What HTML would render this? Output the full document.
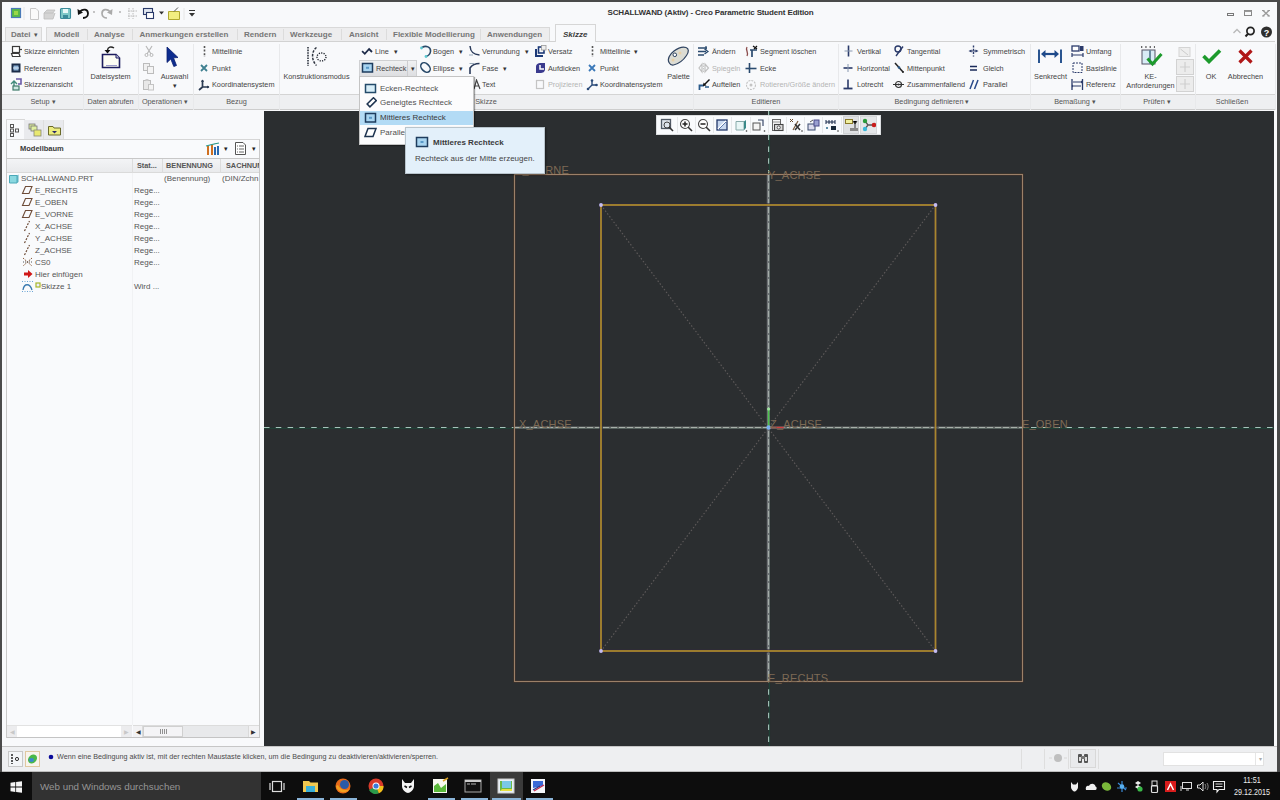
<!DOCTYPE html>
<html><head><meta charset="utf-8"><style>
html,body{margin:0;padding:0;width:1280px;height:800px;overflow:hidden;background:#4a4a4a;font-family:"Liberation Sans",sans-serif;}
div{box-sizing:border-box;}
</style></head><body>
<div style="position:absolute;left:2px;top:2px;width:1275px;height:770px;background:#f8f9fb;"></div>
<div style="position:absolute;left:607.5px;top:7.0px;height:12px;line-height:12px;font-size:8px;color:#333;font-weight:bold;letter-spacing:-0.15px;white-space:nowrap;">SCHALLWAND (Aktiv) - Creo Parametric Student Edition</div>
<div style="position:absolute;left:5px;top:27px;width:37px;height:15px;background:#ededee;border:1px solid #d9d9d9;border-bottom:none;"></div>
<div style="position:absolute;left:46px;top:27px;width:504px;height:15px;background:#ededee;border:1px solid #d9d9d9;border-bottom:none;"></div>
<div style="position:absolute;left:87px;top:29px;width:1px;height:11px;background:#dcdcdc;"></div>
<div style="position:absolute;left:132px;top:29px;width:1px;height:11px;background:#dcdcdc;"></div>
<div style="position:absolute;left:237px;top:29px;width:1px;height:11px;background:#dcdcdc;"></div>
<div style="position:absolute;left:283px;top:29px;width:1px;height:11px;background:#dcdcdc;"></div>
<div style="position:absolute;left:341px;top:29px;width:1px;height:11px;background:#dcdcdc;"></div>
<div style="position:absolute;left:386px;top:29px;width:1px;height:11px;background:#dcdcdc;"></div>
<div style="position:absolute;left:480px;top:29px;width:1px;height:11px;background:#dcdcdc;"></div>
<div style="position:absolute;left:2px;top:41px;width:1273px;height:1px;background:#d2d2d2;"></div>
<div style="position:absolute;left:555px;top:24px;width:41px;height:18px;background:#f8f9fb;border:1px solid #d6d6d6;border-bottom:none;"></div>
<div style="position:absolute;left:11px;top:28.5px;height:12px;line-height:12px;font-size:8px;color:#767676;font-weight:bold;letter-spacing:0px;white-space:nowrap;">Datei</div>
<div style="position:absolute;left:54px;top:28.5px;height:12px;line-height:12px;font-size:8px;color:#767676;font-weight:bold;letter-spacing:0px;white-space:nowrap;">Modell</div>
<div style="position:absolute;left:94px;top:28.5px;height:12px;line-height:12px;font-size:8px;color:#767676;font-weight:bold;letter-spacing:0px;white-space:nowrap;">Analyse</div>
<div style="position:absolute;left:139.5px;top:28.5px;height:12px;line-height:12px;font-size:8px;color:#767676;font-weight:bold;letter-spacing:0px;white-space:nowrap;">Anmerkungen erstellen</div>
<div style="position:absolute;left:244px;top:28.5px;height:12px;line-height:12px;font-size:8px;color:#767676;font-weight:bold;letter-spacing:0px;white-space:nowrap;">Rendern</div>
<div style="position:absolute;left:290px;top:28.5px;height:12px;line-height:12px;font-size:8px;color:#767676;font-weight:bold;letter-spacing:0px;white-space:nowrap;">Werkzeuge</div>
<div style="position:absolute;left:349px;top:28.5px;height:12px;line-height:12px;font-size:8px;color:#767676;font-weight:bold;letter-spacing:0px;white-space:nowrap;">Ansicht</div>
<div style="position:absolute;left:393px;top:28.5px;height:12px;line-height:12px;font-size:8px;color:#767676;font-weight:bold;letter-spacing:0px;white-space:nowrap;">Flexible Modellierung</div>
<div style="position:absolute;left:487px;top:28.5px;height:12px;line-height:12px;font-size:8px;color:#767676;font-weight:bold;letter-spacing:0px;white-space:nowrap;">Anwendungen</div>
<div style="position:absolute;left:563px;top:28.5px;height:12px;line-height:12px;font-size:8px;color:#3c3c3c;font-weight:bold;letter-spacing:0px;white-space:nowrap;font-style:italic;">Skizze</div>
<div style="position:absolute;left:2px;top:94px;width:1273px;height:16px;background:#eeeff1;border-top:1px solid #d4d4d4;border-bottom:1px solid #cdcdcd;"></div>
<div style="position:absolute;left:83px;top:44px;width:1px;height:66px;background:#e8e9eb;"></div>
<div style="position:absolute;left:138px;top:44px;width:1px;height:66px;background:#e8e9eb;"></div>
<div style="position:absolute;left:193px;top:44px;width:1px;height:66px;background:#e8e9eb;"></div>
<div style="position:absolute;left:279px;top:44px;width:1px;height:66px;background:#e8e9eb;"></div>
<div style="position:absolute;left:693px;top:44px;width:1px;height:66px;background:#e8e9eb;"></div>
<div style="position:absolute;left:838px;top:44px;width:1px;height:66px;background:#e8e9eb;"></div>
<div style="position:absolute;left:1030px;top:44px;width:1px;height:66px;background:#e8e9eb;"></div>
<div style="position:absolute;left:1120px;top:44px;width:1px;height:66px;background:#e8e9eb;"></div>
<div style="position:absolute;left:1195px;top:44px;width:1px;height:66px;background:#e8e9eb;"></div>
<div style="position:absolute;left:1275px;top:44px;width:1px;height:66px;background:#e8e9eb;"></div>
<div style="position:absolute;left:-157px;width:400px;text-align:center;top:96.0px;height:12px;line-height:12px;font-size:7.3px;color:#555;font-weight:normal;letter-spacing:0px;white-space:nowrap;">Setup &#9662;</div>
<div style="position:absolute;left:-89.5px;width:400px;text-align:center;top:96.0px;height:12px;line-height:12px;font-size:7.3px;color:#555;font-weight:normal;letter-spacing:0px;white-space:nowrap;">Daten abrufen</div>
<div style="position:absolute;left:-35px;width:400px;text-align:center;top:96.0px;height:12px;line-height:12px;font-size:7.3px;color:#555;font-weight:normal;letter-spacing:0px;white-space:nowrap;">Operationen &#9662;</div>
<div style="position:absolute;left:36.5px;width:400px;text-align:center;top:96.0px;height:12px;line-height:12px;font-size:7.3px;color:#555;font-weight:normal;letter-spacing:0px;white-space:nowrap;">Bezug</div>
<div style="position:absolute;left:286px;width:400px;text-align:center;top:96.0px;height:12px;line-height:12px;font-size:7.3px;color:#555;font-weight:normal;letter-spacing:0px;white-space:nowrap;">Skizze</div>
<div style="position:absolute;left:566px;width:400px;text-align:center;top:96.0px;height:12px;line-height:12px;font-size:7.3px;color:#555;font-weight:normal;letter-spacing:0px;white-space:nowrap;">Editieren</div>
<div style="position:absolute;left:732px;width:400px;text-align:center;top:96.0px;height:12px;line-height:12px;font-size:7.3px;color:#555;font-weight:normal;letter-spacing:0px;white-space:nowrap;">Bedingung definieren &#9662;</div>
<div style="position:absolute;left:875px;width:400px;text-align:center;top:96.0px;height:12px;line-height:12px;font-size:7.3px;color:#555;font-weight:normal;letter-spacing:0px;white-space:nowrap;">Bema&szlig;ung &#9662;</div>
<div style="position:absolute;left:957px;width:400px;text-align:center;top:96.0px;height:12px;line-height:12px;font-size:7.3px;color:#555;font-weight:normal;letter-spacing:0px;white-space:nowrap;">Pr&uuml;fen &#9662;</div>
<div style="position:absolute;left:1032px;width:400px;text-align:center;top:96.0px;height:12px;line-height:12px;font-size:7.3px;color:#555;font-weight:normal;letter-spacing:0px;white-space:nowrap;">Schlie&szlig;en</div>
<div style="position:absolute;left:24px;top:45.6px;height:12px;line-height:12px;font-size:7.3px;color:#444;font-weight:normal;letter-spacing:0px;white-space:nowrap;">Skizze einrichten</div>
<div style="position:absolute;left:24px;top:62.599999999999994px;height:12px;line-height:12px;font-size:7.3px;color:#444;font-weight:normal;letter-spacing:0px;white-space:nowrap;">Referenzen</div>
<div style="position:absolute;left:24px;top:78.6px;height:12px;line-height:12px;font-size:7.3px;color:#444;font-weight:normal;letter-spacing:0px;white-space:nowrap;">Skizzenansicht</div>
<div style="position:absolute;left:-89.5px;width:400px;text-align:center;top:70.8px;height:12px;line-height:12px;font-size:7.3px;color:#444;font-weight:normal;letter-spacing:0px;white-space:nowrap;">Dateisystem</div>
<div style="position:absolute;left:-25.5px;width:400px;text-align:center;top:70.8px;height:12px;line-height:12px;font-size:7.3px;color:#444;font-weight:normal;letter-spacing:0px;white-space:nowrap;">Auswahl</div>
<div style="position:absolute;left:212px;top:45.6px;height:12px;line-height:12px;font-size:7.3px;color:#444;font-weight:normal;letter-spacing:0px;white-space:nowrap;">Mittellinie</div>
<div style="position:absolute;left:212px;top:62.599999999999994px;height:12px;line-height:12px;font-size:7.3px;color:#444;font-weight:normal;letter-spacing:0px;white-space:nowrap;">Punkt</div>
<div style="position:absolute;left:212px;top:78.6px;height:12px;line-height:12px;font-size:7.3px;color:#444;font-weight:normal;letter-spacing:0px;white-space:nowrap;">Koordinatensystem</div>
<div style="position:absolute;left:116.5px;width:400px;text-align:center;top:70.8px;height:12px;line-height:12px;font-size:7.3px;color:#444;font-weight:normal;letter-spacing:0px;white-space:nowrap;">Konstruktionsmodus</div>
<div style="position:absolute;left:375px;top:45.6px;height:12px;line-height:12px;font-size:7.3px;color:#444;font-weight:normal;letter-spacing:0px;white-space:nowrap;">Line</div>
<div style="position:absolute;left:433px;top:45.6px;height:12px;line-height:12px;font-size:7.3px;color:#444;font-weight:normal;letter-spacing:0px;white-space:nowrap;">Bogen</div>
<div style="position:absolute;left:433px;top:62.599999999999994px;height:12px;line-height:12px;font-size:7.3px;color:#444;font-weight:normal;letter-spacing:0px;white-space:nowrap;">Ellipse</div>
<div style="position:absolute;left:482px;top:45.6px;height:12px;line-height:12px;font-size:7.3px;color:#444;font-weight:normal;letter-spacing:0px;white-space:nowrap;">Verrundung</div>
<div style="position:absolute;left:482px;top:62.599999999999994px;height:12px;line-height:12px;font-size:7.3px;color:#444;font-weight:normal;letter-spacing:0px;white-space:nowrap;">Fase</div>
<div style="position:absolute;left:482px;top:78.6px;height:12px;line-height:12px;font-size:7.3px;color:#444;font-weight:normal;letter-spacing:0px;white-space:nowrap;">Text</div>
<div style="position:absolute;left:548px;top:45.6px;height:12px;line-height:12px;font-size:7.3px;color:#444;font-weight:normal;letter-spacing:0px;white-space:nowrap;">Versatz</div>
<div style="position:absolute;left:548px;top:62.599999999999994px;height:12px;line-height:12px;font-size:7.3px;color:#444;font-weight:normal;letter-spacing:0px;white-space:nowrap;">Aufdicken</div>
<div style="position:absolute;left:548px;top:78.6px;height:12px;line-height:12px;font-size:7.3px;color:#b4b4b4;font-weight:normal;letter-spacing:0px;white-space:nowrap;">Projizieren</div>
<div style="position:absolute;left:600px;top:45.6px;height:12px;line-height:12px;font-size:7.3px;color:#444;font-weight:normal;letter-spacing:0px;white-space:nowrap;">Mittellinie</div>
<div style="position:absolute;left:600px;top:62.599999999999994px;height:12px;line-height:12px;font-size:7.3px;color:#444;font-weight:normal;letter-spacing:0px;white-space:nowrap;">Punkt</div>
<div style="position:absolute;left:600px;top:78.6px;height:12px;line-height:12px;font-size:7.3px;color:#444;font-weight:normal;letter-spacing:0px;white-space:nowrap;">Koordinatensystem</div>
<div style="position:absolute;left:478.5px;width:400px;text-align:center;top:70.8px;height:12px;line-height:12px;font-size:7.3px;color:#444;font-weight:normal;letter-spacing:0px;white-space:nowrap;">Palette</div>
<div style="position:absolute;left:712px;top:45.6px;height:12px;line-height:12px;font-size:7.3px;color:#444;font-weight:normal;letter-spacing:0px;white-space:nowrap;">&Auml;ndern</div>
<div style="position:absolute;left:712px;top:62.599999999999994px;height:12px;line-height:12px;font-size:7.3px;color:#b4b4b4;font-weight:normal;letter-spacing:0px;white-space:nowrap;">Spiegeln</div>
<div style="position:absolute;left:712px;top:78.6px;height:12px;line-height:12px;font-size:7.3px;color:#444;font-weight:normal;letter-spacing:0px;white-space:nowrap;">Aufteilen</div>
<div style="position:absolute;left:760px;top:45.6px;height:12px;line-height:12px;font-size:7.3px;color:#444;font-weight:normal;letter-spacing:0px;white-space:nowrap;">Segment l&ouml;schen</div>
<div style="position:absolute;left:760px;top:62.599999999999994px;height:12px;line-height:12px;font-size:7.3px;color:#444;font-weight:normal;letter-spacing:0px;white-space:nowrap;">Ecke</div>
<div style="position:absolute;left:760px;top:78.6px;height:12px;line-height:12px;font-size:7.3px;color:#b4b4b4;font-weight:normal;letter-spacing:0px;white-space:nowrap;">Rotieren/Gr&ouml;&szlig;e &auml;ndern</div>
<div style="position:absolute;left:857px;top:45.6px;height:12px;line-height:12px;font-size:7.3px;color:#444;font-weight:normal;letter-spacing:0px;white-space:nowrap;">Vertikal</div>
<div style="position:absolute;left:857px;top:62.599999999999994px;height:12px;line-height:12px;font-size:7.3px;color:#444;font-weight:normal;letter-spacing:0px;white-space:nowrap;">Horizontal</div>
<div style="position:absolute;left:857px;top:78.6px;height:12px;line-height:12px;font-size:7.3px;color:#444;font-weight:normal;letter-spacing:0px;white-space:nowrap;">Lotrecht</div>
<div style="position:absolute;left:907px;top:45.6px;height:12px;line-height:12px;font-size:7.3px;color:#444;font-weight:normal;letter-spacing:0px;white-space:nowrap;">Tangential</div>
<div style="position:absolute;left:907px;top:62.599999999999994px;height:12px;line-height:12px;font-size:7.3px;color:#444;font-weight:normal;letter-spacing:0px;white-space:nowrap;">Mittenpunkt</div>
<div style="position:absolute;left:907px;top:78.6px;height:12px;line-height:12px;font-size:7.3px;color:#444;font-weight:normal;letter-spacing:0px;white-space:nowrap;">Zusammenfallend</div>
<div style="position:absolute;left:983px;top:45.6px;height:12px;line-height:12px;font-size:7.3px;color:#444;font-weight:normal;letter-spacing:0px;white-space:nowrap;">Symmetrisch</div>
<div style="position:absolute;left:983px;top:62.599999999999994px;height:12px;line-height:12px;font-size:7.3px;color:#444;font-weight:normal;letter-spacing:0px;white-space:nowrap;">Gleich</div>
<div style="position:absolute;left:983px;top:78.6px;height:12px;line-height:12px;font-size:7.3px;color:#444;font-weight:normal;letter-spacing:0px;white-space:nowrap;">Parallel</div>
<div style="position:absolute;left:850.5px;width:400px;text-align:center;top:70.8px;height:12px;line-height:12px;font-size:7.3px;color:#444;font-weight:normal;letter-spacing:0px;white-space:nowrap;">Senkrecht</div>
<div style="position:absolute;left:1086px;top:45.6px;height:12px;line-height:12px;font-size:7.3px;color:#444;font-weight:normal;letter-spacing:0px;white-space:nowrap;">Umfang</div>
<div style="position:absolute;left:1086px;top:62.599999999999994px;height:12px;line-height:12px;font-size:7.3px;color:#444;font-weight:normal;letter-spacing:0px;white-space:nowrap;">Basislinie</div>
<div style="position:absolute;left:1086px;top:78.6px;height:12px;line-height:12px;font-size:7.3px;color:#444;font-weight:normal;letter-spacing:0px;white-space:nowrap;">Referenz</div>
<div style="position:absolute;left:950.5px;width:400px;text-align:center;top:70.8px;height:12px;line-height:12px;font-size:7.3px;color:#444;font-weight:normal;letter-spacing:0px;white-space:nowrap;">KE-</div>
<div style="position:absolute;left:950.5px;width:400px;text-align:center;top:79.8px;height:12px;line-height:12px;font-size:7.3px;color:#444;font-weight:normal;letter-spacing:0px;white-space:nowrap;">Anforderungen</div>
<div style="position:absolute;left:1011px;width:400px;text-align:center;top:70.8px;height:12px;line-height:12px;font-size:7.3px;color:#444;font-weight:normal;letter-spacing:0px;white-space:nowrap;">OK</div>
<div style="position:absolute;left:1045.5px;width:400px;text-align:center;top:70.8px;height:12px;line-height:12px;font-size:7.3px;color:#444;font-weight:normal;letter-spacing:0px;white-space:nowrap;">Abbrechen</div>
<div style="position:absolute;left:264px;top:111px;width:1010px;height:635px;background:#2b2e30;"></div>
<div style="position:absolute;left:6px;top:119px;width:19px;height:21px;background:#f8f9fb;border:1px solid #d8d8d8;border-bottom:none;"></div>
<div style="position:absolute;left:24px;top:120px;width:20px;height:19px;background:#e9eaed;border-right:1px solid #dedede;"></div>
<div style="position:absolute;left:44px;top:120px;width:20px;height:19px;background:#e9eaed;border-right:1px solid #dedede;"></div>
<div style="position:absolute;left:6px;top:139px;width:254px;height:599px;border:1px solid #c9c9c9;border-top:1px solid #d6d6d6;background:#f9fafc;"></div>
<div style="position:absolute;left:20px;top:142.5px;height:12px;line-height:12px;font-size:7.5px;color:#3a3a3a;font-weight:bold;letter-spacing:0px;white-space:nowrap;">Modellbaum</div>
<div style="position:absolute;left:7px;top:158px;width:252px;height:1px;background:#c8c8c8;"></div>
<div style="position:absolute;left:7px;top:159px;width:252px;height:14px;background:linear-gradient(#f3f4f6,#e9eaec);border-bottom:1px solid #dadada;"></div>
<div style="position:absolute;left:132px;top:159px;width:1px;height:14px;background:#dcdcdc;"></div>
<div style="position:absolute;left:162px;top:159px;width:1px;height:14px;background:#dcdcdc;"></div>
<div style="position:absolute;left:220px;top:159px;width:1px;height:14px;background:#dcdcdc;"></div>
<div style="position:absolute;left:137px;top:160.0px;height:12px;line-height:12px;font-size:7.3px;color:#555;font-weight:bold;letter-spacing:0px;white-space:nowrap;">Stat...</div>
<div style="position:absolute;left:166px;top:160.0px;height:12px;line-height:12px;font-size:7.3px;color:#555;font-weight:bold;letter-spacing:0px;white-space:nowrap;">BENENNUNG</div>
<div style="position:absolute;left:226px;top:160.0px;height:12px;line-height:12px;font-size:7.3px;color:#555;font-weight:bold;letter-spacing:0px;white-space:nowrap;overflow:hidden;width:33px;">SACHNUMMER</div>
<div style="position:absolute;left:21px;top:173.0px;height:12px;line-height:12px;font-size:8px;color:#555;font-weight:normal;letter-spacing:0px;white-space:nowrap;">SCHALLWAND.PRT</div>
<div style="position:absolute;left:35px;top:185.0px;height:12px;line-height:12px;font-size:8px;color:#555;font-weight:normal;letter-spacing:0px;white-space:nowrap;">E_RECHTS</div>
<div style="position:absolute;left:134px;top:185.0px;height:12px;line-height:12px;font-size:8px;color:#555;font-weight:normal;letter-spacing:0px;white-space:nowrap;">Rege...</div>
<div style="position:absolute;left:35px;top:197.0px;height:12px;line-height:12px;font-size:8px;color:#555;font-weight:normal;letter-spacing:0px;white-space:nowrap;">E_OBEN</div>
<div style="position:absolute;left:134px;top:197.0px;height:12px;line-height:12px;font-size:8px;color:#555;font-weight:normal;letter-spacing:0px;white-space:nowrap;">Rege...</div>
<div style="position:absolute;left:35px;top:209.0px;height:12px;line-height:12px;font-size:8px;color:#555;font-weight:normal;letter-spacing:0px;white-space:nowrap;">E_VORNE</div>
<div style="position:absolute;left:134px;top:209.0px;height:12px;line-height:12px;font-size:8px;color:#555;font-weight:normal;letter-spacing:0px;white-space:nowrap;">Rege...</div>
<div style="position:absolute;left:35px;top:221.0px;height:12px;line-height:12px;font-size:8px;color:#555;font-weight:normal;letter-spacing:0px;white-space:nowrap;">X_ACHSE</div>
<div style="position:absolute;left:134px;top:221.0px;height:12px;line-height:12px;font-size:8px;color:#555;font-weight:normal;letter-spacing:0px;white-space:nowrap;">Rege...</div>
<div style="position:absolute;left:35px;top:233.0px;height:12px;line-height:12px;font-size:8px;color:#555;font-weight:normal;letter-spacing:0px;white-space:nowrap;">Y_ACHSE</div>
<div style="position:absolute;left:134px;top:233.0px;height:12px;line-height:12px;font-size:8px;color:#555;font-weight:normal;letter-spacing:0px;white-space:nowrap;">Rege...</div>
<div style="position:absolute;left:35px;top:245.0px;height:12px;line-height:12px;font-size:8px;color:#555;font-weight:normal;letter-spacing:0px;white-space:nowrap;">Z_ACHSE</div>
<div style="position:absolute;left:134px;top:245.0px;height:12px;line-height:12px;font-size:8px;color:#555;font-weight:normal;letter-spacing:0px;white-space:nowrap;">Rege...</div>
<div style="position:absolute;left:35px;top:257.0px;height:12px;line-height:12px;font-size:8px;color:#555;font-weight:normal;letter-spacing:0px;white-space:nowrap;">CS0</div>
<div style="position:absolute;left:134px;top:257.0px;height:12px;line-height:12px;font-size:8px;color:#555;font-weight:normal;letter-spacing:0px;white-space:nowrap;">Rege...</div>
<div style="position:absolute;left:35px;top:269.0px;height:12px;line-height:12px;font-size:8px;color:#555;font-weight:normal;letter-spacing:0px;white-space:nowrap;">Hier einf&uuml;gen</div>
<div style="position:absolute;left:41px;top:281.0px;height:12px;line-height:12px;font-size:8px;color:#555;font-weight:normal;letter-spacing:0px;white-space:nowrap;">Skizze 1</div>
<div style="position:absolute;left:134px;top:281.0px;height:12px;line-height:12px;font-size:8px;color:#555;font-weight:normal;letter-spacing:0px;white-space:nowrap;">Wird ...</div>
<div style="position:absolute;left:164px;top:173.0px;height:12px;line-height:12px;font-size:8px;color:#555;font-weight:normal;letter-spacing:0px;white-space:nowrap;">(Benennung)</div>
<div style="position:absolute;left:222px;top:173.0px;height:12px;line-height:12px;font-size:8px;color:#555;font-weight:normal;letter-spacing:0px;white-space:nowrap;">(DIN/Zchn</div>
<div style="position:absolute;left:132px;top:173px;width:1px;height:552px;background:#f1f2f4;"></div>
<div style="position:absolute;left:7px;top:725px;width:125px;height:12px;background:#ececee;border-top:1px solid #e2e2e2;"></div>
<div style="position:absolute;left:17px;top:726px;width:104px;height:11px;background:#ffffff;"></div>
<div style="position:absolute;left:133px;top:725px;width:126px;height:12px;background:#e8e9eb;border-top:1px solid #dcdcdc;"></div>
<div style="position:absolute;left:143px;top:726px;width:40px;height:11px;background:#f4f4f6;border:1px solid #d0d0d0;"></div>
<div style="position:absolute;left:7px;top:737px;width:253px;height:1px;background:#c4c4c4;"></div>
<div style="position:absolute;left:2px;top:746px;width:1275px;height:1px;background:#c6c6c6;"></div>
<div style="position:absolute;left:2px;top:747px;width:1275px;height:24px;background:#eeeff1;"></div>
<div style="position:absolute;left:2px;top:771px;width:1275px;height:1px;background:#bdbdbd;"></div>
<div style="position:absolute;left:57px;top:751.0px;height:12px;line-height:12px;font-size:7.2px;color:#4a4a4a;font-weight:normal;letter-spacing:0px;white-space:nowrap;">Wenn eine Bedingung aktiv ist, mit der rechten Maustaste klicken, um die Bedingung zu deaktivieren/aktivieren/sperren.</div>
<div style="position:absolute;left:0px;top:772px;width:1280px;height:28px;background:#0d0d0d;"></div>
<div style="position:absolute;left:32px;top:772px;width:229px;height:28px;background:#323232;"></div>
<div style="position:absolute;left:40px;top:779.5px;height:14px;line-height:14px;font-size:9.8px;color:#959595;font-weight:normal;letter-spacing:0px;white-space:nowrap;">Web und Windows durchsuchen</div>
<div style="position:absolute;left:1051.5px;width:400px;text-align:center;top:774.3px;height:12px;line-height:12px;font-size:8.8px;color:#ececec;font-weight:normal;letter-spacing:0px;white-space:nowrap;transform:scaleX(0.82);">11:51</div>
<div style="position:absolute;left:1051.5px;width:400px;text-align:center;top:785.8px;height:12px;line-height:12px;font-size:9px;color:#ececec;font-weight:normal;letter-spacing:0px;white-space:nowrap;transform:scaleX(0.8);">29.12.2015</div>
<svg style="position:absolute;left:0px;top:0px" width="1280" height="800" viewBox="0 0 1280 800"><line x1="264" y1="428.3" x2="1274" y2="428.3" stroke="#1f4035" stroke-width="1.3"/><line x1="264" y1="427.5" x2="1274" y2="427.5" stroke="#a6c4bb" stroke-width="1.1" stroke-dasharray="5.5,6.3"/><line x1="769.4" y1="111" x2="769.4" y2="746" stroke="#1f4035" stroke-width="1.3"/><line x1="768.6" y1="111" x2="768.6" y2="746" stroke="#a6c4bb" stroke-width="1.1" stroke-dasharray="5.5,6.3"/><rect x="514.5" y="174.5" width="508" height="507" fill="none" stroke="#3d3027" stroke-width="2.2"/><rect x="514.5" y="174.5" width="508" height="507" fill="none" stroke="#9c8068" stroke-width="1.1"/><line x1="768.3" y1="175" x2="768.3" y2="681" stroke="#6e7275" stroke-width="3"/><line x1="768.6" y1="175" x2="768.6" y2="681" stroke="#aab2ae" stroke-width="1" stroke-dasharray="6,2"/><line x1="515" y1="427.6" x2="1022" y2="427.6" stroke="#6a6e6c" stroke-width="2.2"/><line x1="515" y1="427.5" x2="1022" y2="427.5" stroke="#a8b0aa" stroke-width="1" stroke-dasharray="6,2"/><line x1="601" y1="205" x2="935.5" y2="651" stroke="#5e5a5a" stroke-width="1.1" stroke-dasharray="1.5,2"/><line x1="935.5" y1="205" x2="601" y2="651" stroke="#5e5a5a" stroke-width="1.1" stroke-dasharray="1.5,2"/><rect x="601" y="205" width="334.5" height="446" fill="none" stroke="#2f2a3a" stroke-width="4" opacity="0.6"/><rect x="601" y="205" width="334.5" height="446" fill="none" stroke="#a8862e" stroke-width="1.8"/><circle cx="601" cy="205" r="1.9" fill="#c4bcf2"/><circle cx="935.5" cy="205" r="1.9" fill="#c4bcf2"/><circle cx="601" cy="651" r="1.9" fill="#c4bcf2"/><circle cx="935.5" cy="651" r="1.9" fill="#c4bcf2"/><line x1="768.6" y1="427" x2="768.6" y2="408" stroke="#4dc24d" stroke-width="1.5"/><circle cx="768.6" cy="409" r="1.6" fill="#9de29d"/><line x1="769" y1="427.5" x2="784" y2="427.5" stroke="#d04040" stroke-width="1.5"/><circle cx="768.6" cy="427.5" r="2.2" fill="#7ab0f0"/><text x="515" y="174" font-family="Liberation Sans" font-size="11" fill="#7d6a55" letter-spacing="0.2">E_VORNE</text><text x="768" y="178.5" font-family="Liberation Sans" font-size="11" fill="#7d6a55" letter-spacing="0.2">Y_ACHSE</text><text x="519" y="428" font-family="Liberation Sans" font-size="11" fill="#7d6a55" letter-spacing="0.2">X_ACHSE</text><text x="770" y="428" font-family="Liberation Sans" font-size="11" fill="#7d6a55" letter-spacing="0.2">Z_ACHSE</text><text x="1022" y="428" font-family="Liberation Sans" font-size="11" fill="#7d6a55" letter-spacing="0.2">E_OBEN</text><text x="768" y="681.5" font-family="Liberation Sans" font-size="11" fill="#7d6a55" letter-spacing="0.2">E_RECHTS</text></svg>
<svg style="position:absolute;left:10px;top:45px" width="13" height="13" viewBox="0 0 13 13"><rect x="2.5" y="1.5" width="7" height="6" fill="#fff" stroke="#3a3a3a" stroke-width="1.2"/><path d="M1.5 8.5 L9 8.5 L10 11.5 L2.5 11.5 Z" fill="#fff" stroke="#3a3a3a" stroke-width="1.2"/><path d="M9.5 4.5 L12 4.5" stroke="#3a3a3a" stroke-width="1.2"/></svg>
<svg style="position:absolute;left:11px;top:63px" width="11" height="11" viewBox="0 0 11 11"><rect x="0.5" y="0.5" width="9" height="9" fill="#1b2c48"/><rect x="2.5" y="2.5" width="5" height="5" fill="#8fb4d8"/><path d="M2 5 L8 5" stroke="#d8e6f4" stroke-width="1"/></svg>
<svg style="position:absolute;left:9px;top:78px" width="14" height="13" viewBox="0 0 14 13"><path d="M7 1 h5 v5 h-3" fill="none" stroke="#6a5aa8" stroke-width="1.6"/><path d="M2 6 l3 -3 l3 3 M5 3 v6" fill="none" stroke="#3f8a7a" stroke-width="1.4"/><rect x="4" y="8" width="6" height="4" fill="#cfe8e4" stroke="#3f7a6a" stroke-width="1.2"/></svg>
<svg style="position:absolute;left:101px;top:45px" width="20" height="24" viewBox="0 0 20 24"><path d="M13 3 C10 1 7 2 6.5 5" fill="none" stroke="#222" stroke-width="1.5"/><path d="M3.5 5 L9.5 5 L6.5 8.5 Z" fill="#111"/><path d="M1.5 9.5 H15 L18.5 13 V22.5 H1.5 Z" fill="#fdfdf4" stroke="#1d1d5e" stroke-width="1.6"/><path d="M15 9.5 V13 H18.5" fill="#c8c8e8" stroke="#1d1d5e" stroke-width="1"/><path d="M5 20.5 H16" stroke="#9a9ac8" stroke-width="1"/></svg>
<svg style="position:absolute;left:143px;top:45px" width="12" height="12" viewBox="0 0 12 12"><path d="M3 1 L8 9 M9 1 L4 9" stroke="#b8b8b8" stroke-width="1.2"/><circle cx="3.5" cy="10" r="1.5" fill="none" stroke="#b8b8b8"/><circle cx="8.5" cy="10" r="1.5" fill="none" stroke="#b8b8b8"/></svg>
<svg style="position:absolute;left:142px;top:62px" width="13" height="12" viewBox="0 0 13 12"><rect x="1.5" y="1.5" width="6" height="7" fill="#f0f0f0" stroke="#bcbcbc"/><rect x="5.5" y="4.5" width="6" height="7" fill="#f4f4f4" stroke="#bcbcbc"/></svg>
<svg style="position:absolute;left:142px;top:78px" width="13" height="13" viewBox="0 0 13 13"><rect x="1.5" y="2.5" width="7" height="9" fill="#e8e8e8" stroke="#bcbcbc"/><rect x="3.5" y="1" width="3" height="2" fill="#ccc"/><rect x="6.5" y="6.5" width="5" height="5.5" fill="#f4f4f4" stroke="#c4c4c4"/></svg>
<svg style="position:absolute;left:165px;top:46px" width="15" height="23" viewBox="0 0 15 23"><path d="M2 1 L13 11.5 L8.5 11.8 L11.5 19.5 L8.8 20.5 L5.8 13 L2 16.5 Z" fill="#0d2c8f" stroke="#0a2070" stroke-width="0.8"/></svg>
<div style="position:absolute;left:-25.5px;width:400px;text-align:center;top:79.5px;height:12px;line-height:12px;font-size:7px;color:#333;font-weight:normal;letter-spacing:0px;white-space:nowrap;">&#9662;</div>
<div style="position:absolute;left:33.5px;top:28.5px;height:12px;line-height:12px;font-size:7px;color:#555;font-weight:normal;letter-spacing:0px;white-space:nowrap;">&#9662;</div>
<svg style="position:absolute;left:202px;top:45px" width="5" height="13" viewBox="0 0 5 13"><path d="M2.5 1 V12" stroke="#555" stroke-width="1.6" stroke-dasharray="2,1.6"/></svg>
<svg style="position:absolute;left:200px;top:64px" width="8" height="8" viewBox="0 0 8 8"><path d="M1 1 L7 7 M7 1 L1 7" stroke="#3f8090" stroke-width="1.8"/></svg>
<svg style="position:absolute;left:198px;top:79px" width="12" height="12" viewBox="0 0 12 12"><path d="M4.5 1 V8 L1 11 M4.5 8 H11" fill="none" stroke="#2a3a52" stroke-width="1.7"/><path d="M3 3 L4.5 0.5 L6 3 Z M9 6.5 L11.5 8 L9 9.5 Z" fill="#2a3a52"/></svg>
<svg style="position:absolute;left:305px;top:45px" width="24" height="23" viewBox="0 0 24 23"><path d="M3 2 V21" stroke="#2f3540" stroke-width="1.6" stroke-dasharray="1.6,1"/><path d="M11.5 2.5 C6.5 6 6 15 11.5 20.5" fill="none" stroke="#2f3540" stroke-width="1.5" stroke-dasharray="2.5,1.3"/><ellipse cx="16.5" cy="12" rx="4.5" ry="4" fill="none" stroke="#1a1f28" stroke-width="1.3" stroke-dasharray="1.2,1.2"/></svg>
<svg style="position:absolute;left:361px;top:47px" width="13" height="9" viewBox="0 0 13 9"><path d="M1.1 4.2 L3.8 6.8 L8.1 2 L11 5" fill="none" stroke="#1c2a48" stroke-width="1.8"/></svg>
<div style="position:absolute;left:196px;width:400px;text-align:center;top:45.6px;height:12px;line-height:12px;font-size:7px;color:#333;font-weight:normal;letter-spacing:0px;white-space:nowrap;">&#9662;</div>
<div style="position:absolute;left:359px;top:60px;width:58px;height:17px;background:linear-gradient(#f0f1f2,#dcdde0);border:1px solid #cfd0d2;border-bottom:none;"></div>
<div style="position:absolute;left:407px;top:61px;width:1px;height:16px;background:#cdcdd0;"></div>
<div style="position:absolute;left:376px;top:62.599999999999994px;height:12px;line-height:12px;font-size:7.3px;color:#444;font-weight:normal;letter-spacing:0px;white-space:nowrap;">Rechteck</div>
<svg style="position:absolute;left:361px;top:62px" width="14" height="12" viewBox="0 0 14 12"><rect x="1.5" y="1.5" width="10" height="8.5" fill="#a8d4f0" stroke="#1e3c5e" stroke-width="1.5"/><rect x="5" y="4.8" width="3" height="2" fill="#5a9ac8"/></svg>
<div style="position:absolute;left:212.5px;width:400px;text-align:center;top:62.599999999999994px;height:12px;line-height:12px;font-size:7px;color:#333;font-weight:normal;letter-spacing:0px;white-space:nowrap;">&#9662;</div>
<svg style="position:absolute;left:419px;top:45px" width="13" height="13" viewBox="0 0 13 13"><path d="M3 2.5 C7 0 12 2 11.5 6.5 C11 10 8.5 11 7 11.5" fill="none" stroke="#2a4a6a" stroke-width="1.6"/><circle cx="2.5" cy="3" r="1.4" fill="#5ec8d0"/><circle cx="7" cy="11.5" r="1.4" fill="#5ec8d0"/></svg>
<div style="position:absolute;left:261px;width:400px;text-align:center;top:45.6px;height:12px;line-height:12px;font-size:7px;color:#333;font-weight:normal;letter-spacing:0px;white-space:nowrap;">&#9662;</div>
<svg style="position:absolute;left:419px;top:61px" width="13" height="13" viewBox="0 0 13 13"><ellipse cx="6.5" cy="6.5" rx="5.5" ry="3.8" transform="rotate(45 6.5 6.5)" fill="none" stroke="#2a4a6a" stroke-width="1.6"/></svg>
<div style="position:absolute;left:261px;width:400px;text-align:center;top:62.599999999999994px;height:12px;line-height:12px;font-size:7px;color:#333;font-weight:normal;letter-spacing:0px;white-space:nowrap;">&#9662;</div>
<svg style="position:absolute;left:468px;top:45px" width="13" height="12" viewBox="0 0 13 12"><path d="M2 1 C2.5 7 5 9.5 11.5 10" fill="none" stroke="#2a3a5a" stroke-width="1.5"/><path d="M1 10 H5" stroke="#9ab" stroke-width="1"/></svg>
<div style="position:absolute;left:327px;width:400px;text-align:center;top:45.6px;height:12px;line-height:12px;font-size:7px;color:#333;font-weight:normal;letter-spacing:0px;white-space:nowrap;">&#9662;</div>
<svg style="position:absolute;left:468px;top:62px" width="13" height="13" viewBox="0 0 13 13"><path d="M2 12 V6 C4 3 7 1.5 11.5 1.5" fill="none" stroke="#2a3a5a" stroke-width="1.6"/><path d="M1.5 1.5 H6" stroke="#9ab" stroke-width="1"/></svg>
<div style="position:absolute;left:305px;width:400px;text-align:center;top:62.599999999999994px;height:12px;line-height:12px;font-size:7px;color:#333;font-weight:normal;letter-spacing:0px;white-space:nowrap;">&#9662;</div>
<svg style="position:absolute;left:472px;top:79px" width="9" height="11" viewBox="0 0 9 11"><path d="M2 10 L4.5 1 L8 10 M3 7 H7" fill="none" stroke="#444" stroke-width="1.2"/></svg>
<svg style="position:absolute;left:534px;top:45px" width="13" height="13" viewBox="0 0 13 13"><path d="M2 4 V11 H9" fill="none" stroke="#1d3a78" stroke-width="2"/><rect x="4.5" y="2" width="5.5" height="6" fill="none" stroke="#1d3a78" stroke-width="1.6"/><rect x="7.5" y="0.5" width="4.5" height="4.5" fill="#eee" stroke="#999" stroke-width="0.8"/></svg>
<svg style="position:absolute;left:534px;top:62px" width="12" height="12" viewBox="0 0 12 12"><path d="M2 11 L2 5 C2 2 4 1 7 1 L11 1 L11 7 C11 10 9 11 6 11 Z" fill="#3a3a8e"/><path d="M6 3 V7 H10" fill="none" stroke="#fff" stroke-width="1.5"/></svg>
<svg style="position:absolute;left:535px;top:79px" width="10" height="11" viewBox="0 0 10 11"><rect x="1.5" y="1.5" width="7" height="8" fill="none" stroke="#c4c4c4" stroke-width="1.2"/></svg>
<svg style="position:absolute;left:590px;top:45px" width="5" height="13" viewBox="0 0 5 13"><path d="M2.5 1 V12" stroke="#555" stroke-width="1.6" stroke-dasharray="2,1.6"/></svg>
<div style="position:absolute;left:436px;width:400px;text-align:center;top:45.6px;height:12px;line-height:12px;font-size:7px;color:#333;font-weight:normal;letter-spacing:0px;white-space:nowrap;">&#9662;</div>
<svg style="position:absolute;left:588px;top:64px" width="8" height="8" viewBox="0 0 8 8"><path d="M1 1 L7 7 M7 1 L1 7" stroke="#3a78b8" stroke-width="1.8"/></svg>
<svg style="position:absolute;left:586px;top:79px" width="12" height="12" viewBox="0 0 12 12"><path d="M6 6 L2 10 M6 6 L6 1 M6 6 L11 6" fill="none" stroke="#2a4a78" stroke-width="1.4"/><circle cx="2" cy="10" r="1.3" fill="#2a4a78"/><circle cx="6" cy="1.5" r="1.3" fill="#2a4a78"/><circle cx="10.5" cy="6" r="1.3" fill="#2a4a78"/></svg>
<svg style="position:absolute;left:666px;top:45px" width="24" height="23" viewBox="0 0 24 23"><path d="M3 17.5 C1 14 4 9 8 6 C12 3 17 1.5 20 2.5 C23 3.5 23 7 20.5 10.5 C17.5 15 12 19 7.5 20 C5 20.5 3.8 19 3 17.5 Z" fill="#dcdcd4" stroke="#2e4260" stroke-width="1.2"/><circle cx="8.8" cy="9.8" r="1.8" fill="#fff" stroke="#2e4260" stroke-width="1"/><circle cx="14" cy="8" r="1.5" fill="#e8d0a8"/><circle cx="7" cy="15" r="1.5" fill="#e8d0a8"/></svg>
<svg style="position:absolute;left:697px;top:45px" width="13" height="13" viewBox="0 0 13 13"><path d="M1 3 H10 M1 6.5 H9 M1 10 H7" stroke="#2a4a6e" stroke-width="1.5"/><path d="M9 1 V5 M7.5 4 L11 6.5 L7.5 9" fill="none" stroke="#2a4a6e" stroke-width="1.2"/></svg>
<svg style="position:absolute;left:698px;top:62px" width="12" height="12" viewBox="0 0 12 12"><path d="M5.5 1 V11" stroke="#c8c8c8" stroke-width="1" stroke-dasharray="1.5,1"/><path d="M4 2 L1 6 L4 10 Z M7 2 L10.5 6 L7 10 Z" fill="none" stroke="#c0c0c0" stroke-width="1.2"/></svg>
<svg style="position:absolute;left:698px;top:78px" width="13" height="13" viewBox="0 0 13 13"><path d="M1.5 12 V7.5 H6" fill="none" stroke="#2a5a8a" stroke-width="1.8"/><path d="M11.5 1.5 L6 7" stroke="#111" stroke-width="1.5"/><path d="M5 8 L5.5 4.5 L8.5 7.5 Z" fill="#111"/><path d="M7 9 H11" stroke="#2a5a8a" stroke-width="1.5"/></svg>
<svg style="position:absolute;left:745px;top:45px" width="13" height="13" viewBox="0 0 13 13"><path d="M2 2 C0 5 4 7 2 11" fill="none" stroke="#8a4a4a" stroke-width="1.3"/><path d="M5 5 H12 M7 5 V12" stroke="#2a4a6e" stroke-width="1.7"/><path d="M8 1 L12 4 M12 1 L9 4" stroke="#111" stroke-width="1.2"/></svg>
<svg style="position:absolute;left:745px;top:62px" width="12" height="12" viewBox="0 0 12 12"><path d="M0.5 6.5 H11.5" stroke="#2a4a6e" stroke-width="1.6"/><path d="M4.5 1 V11" stroke="#2a4a6e" stroke-width="1.6"/></svg>
<svg style="position:absolute;left:745px;top:79px" width="12" height="12" viewBox="0 0 12 12"><circle cx="6" cy="6" r="4.5" fill="none" stroke="#c4c4c4" stroke-width="1.1" stroke-dasharray="2,1"/><circle cx="6" cy="6" r="1.5" fill="#c4c4c4"/></svg>
<svg style="position:absolute;left:844px;top:45px" width="9" height="12" viewBox="0 0 9 12"><path d="M4.5 0.5 V11.5" stroke="#2a3a6a" stroke-width="1.6"/><path d="M0.5 6 H8.5" stroke="#8898b0" stroke-width="1"/></svg>
<svg style="position:absolute;left:843px;top:63px" width="10" height="10" viewBox="0 0 10 10"><path d="M0.5 5 H9.5" stroke="#2a3a6a" stroke-width="1.6"/><path d="M5 1 V9" stroke="#8898b0" stroke-width="1"/></svg>
<svg style="position:absolute;left:843px;top:79px" width="10" height="11" viewBox="0 0 10 11"><path d="M5 0.5 V9.5" stroke="#2a3a6a" stroke-width="1.6"/><path d="M0.5 9.5 H9.5" stroke="#2a3a6a" stroke-width="1.8"/></svg>
<svg style="position:absolute;left:894px;top:45px" width="10" height="12" viewBox="0 0 10 12"><circle cx="4" cy="4" r="3" fill="none" stroke="#2a3a6a" stroke-width="1.4"/><path d="M2 11 L9 1.5" stroke="#2a3a6a" stroke-width="1.4"/></svg>
<svg style="position:absolute;left:894px;top:62px" width="10" height="11" viewBox="0 0 10 11"><path d="M1 1 L9 10" stroke="#222" stroke-width="1.5"/><circle cx="5" cy="5.5" r="1.3" fill="#2a5a8a"/><circle cx="9" cy="10" r="1" fill="#222"/></svg>
<svg style="position:absolute;left:893px;top:79px" width="11" height="11" viewBox="0 0 11 11"><circle cx="5.5" cy="5.5" r="3" fill="none" stroke="#333" stroke-width="1.2"/><path d="M0 5.5 H11" stroke="#333" stroke-width="1"/><circle cx="5.5" cy="5.5" r="1" fill="#333"/></svg>
<svg style="position:absolute;left:968px;top:45px" width="11" height="12" viewBox="0 0 11 12"><path d="M5.5 0.5 V11.5" stroke="#2a3a6a" stroke-width="1.4" stroke-dasharray="2,1.3"/><path d="M0.5 6 L3.5 4.5 V7.5 Z M10.5 6 L7.5 4.5 V7.5 Z" fill="#2a3a6a"/><path d="M3 6 H8" stroke="#2a3a6a"/></svg>
<svg style="position:absolute;left:969px;top:64px" width="9" height="8" viewBox="0 0 9 8"><path d="M1 2.5 H8 M1 6 H8" stroke="#1a2a5a" stroke-width="1.6"/></svg>
<svg style="position:absolute;left:969px;top:79px" width="10" height="11" viewBox="0 0 10 11"><path d="M1 10 L4.5 1 M5.5 10 L9 1" stroke="#2a4a8a" stroke-width="1.5"/></svg>
<svg style="position:absolute;left:1037px;top:48px" width="26" height="17" viewBox="0 0 26 17"><path d="M2 1.5 V15 M24 1.5 V15" stroke="#2a5590" stroke-width="2"/><path d="M6 6 H20" stroke="#1e4a8a" stroke-width="2.2"/><path d="M4 6 L8.5 2 V10 Z M22 6 L17.5 2 V10 Z" fill="#1e4a8a"/></svg>
<svg style="position:absolute;left:1071px;top:45px" width="13" height="13" viewBox="0 0 13 13"><rect x="1" y="1" width="7" height="5" fill="#fff" stroke="#2a3a6a" stroke-width="1.3"/><rect x="9" y="1" width="3.5" height="5" fill="#2a3a6a"/><path d="M1 10 H12 M1 8 V12 M12 8 V12" stroke="#2a3a6a" stroke-width="1.2"/></svg>
<svg style="position:absolute;left:1072px;top:62px" width="11" height="12" viewBox="0 0 11 12"><rect x="1" y="1" width="9" height="9.5" fill="none" stroke="#2a3a6a" stroke-width="1" stroke-dasharray="2,1"/></svg>
<svg style="position:absolute;left:1071px;top:78px" width="13" height="13" viewBox="0 0 13 13"><path d="M1 1 V12 M11.5 1 V12" stroke="#2a3a6a" stroke-width="1.3"/><path d="M2 4 H10 M2 8 H10" stroke="#2a3a6a" stroke-width="1.1"/><path d="M10 2.5 L12 4 L10 5.5 M2 6.5 L0.5 8 L2 9.5" fill="#2a3a6a"/></svg>
<svg style="position:absolute;left:1139px;top:45px" width="24" height="23" viewBox="0 0 24 23"><path d="M2 2 H16" stroke="#333" stroke-width="1.3" stroke-dasharray="1.3,3"/><rect x="3" y="5" width="13" height="14" fill="#d8ecf6" stroke="#556" stroke-width="1"/><path d="M11 5 V19" stroke="#6a8aa0" stroke-width="2"/><path d="M8.5 13.5 L13.5 19 L22.5 9" fill="none" stroke="#1c9a2c" stroke-width="3"/></svg>
<svg style="position:absolute;left:1176px;top:46px" width="18" height="47" viewBox="0 0 18 47"><rect x="3" y="1.5" width="11" height="9" fill="#eee" stroke="#d4d4d4"/><path d="M4.5 3 L12 9" stroke="#ccc"/><rect x="0.5" y="13.5" width="17" height="15" fill="#ececec" stroke="#d2d2d2"/><path d="M4 21 H14 M9 16 V26" stroke="#cfcfcf" stroke-width="1.2"/><rect x="0.5" y="30.5" width="17" height="15" fill="#ececec" stroke="#d2d2d2"/><path d="M4 38 H14 M9 33 V43" stroke="#cfcfcf" stroke-width="1.2"/></svg>
<svg style="position:absolute;left:1201px;top:48px" width="21" height="16" viewBox="0 0 21 16"><path d="M2.5 8 L8 13.5 L19 2.5" fill="none" stroke="#1c9a2c" stroke-width="3.6"/></svg>
<svg style="position:absolute;left:1237px;top:49px" width="17" height="15" viewBox="0 0 17 15"><path d="M2.5 1.5 L14.5 13.5 M14.5 1.5 L2.5 13.5" stroke="#b01818" stroke-width="3.2"/></svg>
<div style="position:absolute;left:359px;top:76px;width:115px;height:69px;background:#fcfcfd;border:1px solid #c4c4c4;box-shadow:1px 1px 1px rgba(0,0,0,0.35);"></div>
<div style="position:absolute;left:360px;top:111px;width:113px;height:14px;background:#b3dbf5;"></div>
<div style="position:absolute;left:380px;top:82.5px;height:12px;line-height:12px;font-size:8px;color:#505050;font-weight:normal;letter-spacing:0px;white-space:nowrap;">Ecken-Rechteck</div>
<div style="position:absolute;left:380px;top:97.0px;height:12px;line-height:12px;font-size:8px;color:#505050;font-weight:normal;letter-spacing:0px;white-space:nowrap;">Geneigtes Rechteck</div>
<div style="position:absolute;left:380px;top:112.0px;height:12px;line-height:12px;font-size:8px;color:#3a3a3a;font-weight:normal;letter-spacing:0px;white-space:nowrap;">Mittleres Rechteck</div>
<div style="position:absolute;left:380px;top:126.5px;height:12px;line-height:12px;font-size:8px;color:#505050;font-weight:normal;letter-spacing:0px;white-space:nowrap;">Parallelogramm</div>
<svg style="position:absolute;left:364px;top:83px" width="13" height="11" viewBox="0 0 13 11"><rect x="1.5" y="1.5" width="10" height="8" fill="#d8eef8" stroke="#234a6a" stroke-width="1.5"/></svg>
<svg style="position:absolute;left:365px;top:97px" width="12" height="12" viewBox="0 0 12 12"><rect x="2.5" y="4" width="9" height="4" transform="rotate(-45 6 6)" fill="#fff" stroke="#1e3450" stroke-width="1.5"/></svg>
<svg style="position:absolute;left:364px;top:112px" width="13" height="12" viewBox="0 0 13 12"><rect x="1.5" y="1.5" width="10" height="8.5" fill="#a8d4f0" stroke="#1e3c5e" stroke-width="1.5"/><rect x="5" y="4.8" width="3" height="2" fill="#5a9ac8"/></svg>
<svg style="position:absolute;left:364px;top:127px" width="13" height="11" viewBox="0 0 13 11"><path d="M4 1.5 H12 L9 9.5 H1 Z" fill="#fff" stroke="#1e3450" stroke-width="1.5"/></svg>
<div style="position:absolute;left:405px;top:127px;width:140px;height:47px;background:#e3f0fa;border:1px solid #b8c4cc;box-shadow:1px 1px 2px rgba(0,0,0,0.4);"></div>
<svg style="position:absolute;left:415px;top:136px" width="14" height="12" viewBox="0 0 14 12"><rect x="1.5" y="1.5" width="11" height="9" fill="#a8d4f0" stroke="#1e3c5e" stroke-width="1.5"/><rect x="5.5" y="5" width="3" height="2" fill="#5a9ac8"/></svg>
<div style="position:absolute;left:433px;top:136.5px;height:12px;line-height:12px;font-size:8px;color:#3a3a3a;font-weight:bold;letter-spacing:0px;white-space:nowrap;">Mittleres Rechteck</div>
<div style="position:absolute;left:415px;top:153.0px;height:12px;line-height:12px;font-size:8px;color:#444;font-weight:normal;letter-spacing:0px;white-space:nowrap;">Rechteck aus der Mitte erzeugen.</div>
<div style="position:absolute;left:656px;top:115px;width:225px;height:20px;background:#f9fbfd;border:1px solid #dcdee0;"></div>
<div style="position:absolute;left:677px;top:117px;width:1px;height:16px;background:#e6e8ea;"></div>
<div style="position:absolute;left:695px;top:117px;width:1px;height:16px;background:#e6e8ea;"></div>
<div style="position:absolute;left:713px;top:117px;width:1px;height:16px;background:#e6e8ea;"></div>
<div style="position:absolute;left:731px;top:117px;width:1px;height:16px;background:#e6e8ea;"></div>
<div style="position:absolute;left:750px;top:117px;width:1px;height:16px;background:#e6e8ea;"></div>
<div style="position:absolute;left:768px;top:117px;width:1px;height:16px;background:#e6e8ea;"></div>
<div style="position:absolute;left:786px;top:117px;width:1px;height:16px;background:#e6e8ea;"></div>
<div style="position:absolute;left:804px;top:117px;width:1px;height:16px;background:#e6e8ea;"></div>
<div style="position:absolute;left:822px;top:117px;width:1px;height:16px;background:#e6e8ea;"></div>
<div style="position:absolute;left:841px;top:117px;width:1px;height:16px;background:#e6e8ea;"></div>
<div style="position:absolute;left:843px;top:116px;width:16px;height:18px;background:#dfe1e3;border:1px solid #cfd1d3;"></div>
<div style="position:absolute;left:860px;top:116px;width:17px;height:18px;background:#e4e6e8;border:1px solid #d4d6d8;"></div>
<svg style="position:absolute;left:660px;top:118px" width="14" height="14" viewBox="0 0 14 14"><rect x="1.5" y="1.5" width="9" height="9" fill="#dde4ec" stroke="#505a66" stroke-width="1.3"/><circle cx="7" cy="7" r="3" fill="none" stroke="#444" stroke-width="1"/><path d="M9 9 L13 13" stroke="#333" stroke-width="1.6"/></svg>
<svg style="position:absolute;left:679px;top:118px" width="14" height="14" viewBox="0 0 14 14"><circle cx="6" cy="6" r="4.5" fill="#fff" stroke="#444" stroke-width="1.1"/><path d="M3.5 6 H8.5 M6 3.5 V8.5" stroke="#222" stroke-width="1.5"/><path d="M9 9 L13 13" stroke="#333" stroke-width="1.6"/></svg>
<svg style="position:absolute;left:697px;top:118px" width="14" height="14" viewBox="0 0 14 14"><circle cx="6" cy="6" r="4.5" fill="#fff" stroke="#444" stroke-width="1.1"/><path d="M3.5 6 H8.5" stroke="#222" stroke-width="1.5"/><path d="M9 9 L13 13" stroke="#333" stroke-width="1.6"/></svg>
<svg style="position:absolute;left:715px;top:118px" width="14" height="14" viewBox="0 0 14 14"><rect x="2" y="2" width="10" height="10" fill="#c8d8f0" stroke="#23386a" stroke-width="1.3"/><path d="M3 11 L11 3" stroke="#fff" stroke-width="1.5"/><path d="M4 11 L11 4" stroke="#3a5a9a" stroke-width="0.8"/></svg>
<svg style="position:absolute;left:733px;top:118px" width="15" height="14" viewBox="0 0 15 14"><path d="M3 3.5 H11 V12 H3 Z" fill="#e8f6f6" stroke="#8aa" stroke-width="1"/><path d="M11 3.5 L13 2 V10 L11 12" fill="#3a8a8a"/><circle cx="13.5" cy="13" r="0.8" fill="#333"/></svg>
<svg style="position:absolute;left:751px;top:118px" width="15" height="14" viewBox="0 0 15 14"><rect x="2" y="5" width="7" height="7" fill="#f4f4f4" stroke="#555" stroke-width="1"/><path d="M7 2 H12 V8" fill="none" stroke="#3a4a6a" stroke-width="1.2"/><circle cx="13.5" cy="13" r="0.8" fill="#333"/></svg>
<svg style="position:absolute;left:770px;top:118px" width="14" height="14" viewBox="0 0 14 14"><rect x="2.5" y="1.5" width="8" height="11" fill="#f8f8f8" stroke="#666" stroke-width="1"/><path d="M3 4 H10" stroke="#777" stroke-width="0.8"/><rect x="4.5" y="6.5" width="8.5" height="6" fill="#ddd" stroke="#444" stroke-width="1.1"/><circle cx="8.7" cy="9.5" r="1.6" fill="#fff" stroke="#444" stroke-width="0.9"/></svg>
<svg style="position:absolute;left:788px;top:118px" width="15" height="14" viewBox="0 0 15 14"><path d="M2 1 L5 4 M5 1 L2 4" stroke="#6a4a2a" stroke-width="1"/><path d="M5 12 L10 3" stroke="#7a5a3a" stroke-width="1.2"/><path d="M7 6 L12 12 M12 6 L7 12" stroke="#333" stroke-width="1.5"/><circle cx="14" cy="13" r="0.8" fill="#333"/></svg>
<svg style="position:absolute;left:806px;top:118px" width="15" height="14" viewBox="0 0 15 14"><rect x="2" y="6" width="7" height="6" fill="#dde" stroke="#4a5a7a" stroke-width="1.1"/><rect x="8" y="2" width="5" height="6" fill="#9aa0d0" stroke="#4a4a8a" stroke-width="1"/><path d="M4 4 L7 2" stroke="#555"/></svg>
<svg style="position:absolute;left:824px;top:118px" width="15" height="14" viewBox="0 0 15 14"><path d="M2 2 V6 M5 2 V6 M8 2 V6 M11 2 V6 M2 4 H11" stroke="#1a2a4a" stroke-width="1"/><rect x="7" y="8" width="5" height="4" fill="#1a2a3a"/><circle cx="3" cy="10" r="1" fill="#2a6a8a"/><circle cx="14" cy="13" r="0.8" fill="#333"/></svg>
<svg style="position:absolute;left:844px;top:118px" width="14" height="14" viewBox="0 0 14 14"><rect x="1.5" y="1.5" width="7" height="4" fill="#f0f0a0" stroke="#8a7a2a" stroke-width="1"/><path d="M9 3 L11 6 L13 3 M11 6 V10" stroke="#333" stroke-width="1"/><rect x="6" y="10" width="8" height="3" fill="#888"/></svg>
<svg style="position:absolute;left:862px;top:118px" width="14" height="14" viewBox="0 0 14 14"><path d="M3 3 L6 7 L3 11 M6 7 H12" stroke="#555" stroke-width="1.3" fill="none"/><circle cx="3" cy="3" r="2.2" fill="#2a9a3a"/><circle cx="3" cy="11" r="2.2" fill="#3ab8d8"/><circle cx="12" cy="7" r="2.3" fill="#c81c1c"/></svg>
<svg style="position:absolute;left:1225px;top:8px" width="50" height="10" viewBox="0 0 50 10"><rect x="2.5" y="5.5" width="6" height="2" fill="none" stroke="#777" stroke-width="1"/><rect x="19.5" y="2.5" width="7" height="5" fill="none" stroke="#888" stroke-width="1"/><rect x="19.5" y="2.5" width="7" height="1.5" fill="#999"/><path d="M38 2.5 L44 8 M44 2.5 L38 8" stroke="#999" stroke-width="1.3"/><path d="M37 2.5 H39.5 M42.5 2.5 H45 M37 8 H39.5 M42.5 8 H45" stroke="#999" stroke-width="1"/></svg>
<svg style="position:absolute;left:1232px;top:26px" width="44" height="13" viewBox="0 0 44 13"><path d="M1.5 7 L5 3.5 L8.5 7" fill="none" stroke="#b8b8b8" stroke-width="1.3"/><circle cx="18.5" cy="5" r="3.6" fill="none" stroke="#222" stroke-width="1.7"/><path d="M16 7.8 L13.5 10.5" stroke="#222" stroke-width="2"/><circle cx="34.5" cy="6" r="5.5" fill="#2e2e2e"/><text x="34.5" y="9.5" font-family="Liberation Sans" font-size="9" font-weight="bold" fill="#fff" text-anchor="middle">?</text></svg>
<svg style="position:absolute;left:9px;top:6px" width="190" height="16" viewBox="0 0 190 16"><rect x="2.5" y="2.5" width="9" height="9" fill="#58b848" stroke="#4a7ab8" stroke-width="1.2"/><rect x="5" y="5" width="4" height="4" fill="#9ad848"/><path d="M15 1 V14" stroke="#e6e6e6"/><path d="M21.5 2.5 H27 L29.5 5 V13.5 H21.5 Z" fill="#fafafa" stroke="#c8c8c8" stroke-width="1"/><path d="M35 7 H44 L46 4 L38 4 Z M35 7 V13 H44 L46 7" fill="#d4d4d4" stroke="#bcbcbc" stroke-width="0.8"/><rect x="51.5" y="2.5" width="10" height="10" rx="1" fill="#7ec8c8" stroke="#3a8a9a" stroke-width="1.1"/><rect x="54" y="3" width="5" height="4" fill="#e8f8f8"/><rect x="54" y="9" width="5" height="3.5" fill="#3a8a9a"/><path d="M71 5.5 C74 2.5 79 3 79 7.5 C79 10.5 76.5 12 74 12" fill="none" stroke="#111" stroke-width="1.8"/><path d="M68.5 3 L69 9 L74 6.5 Z" fill="#111"/><circle cx="85" cy="6" r="0.9" fill="#aaa"/><path d="M101 5.5 C98 2.5 93 3 93 7.5 C93 10.5 95.5 12 98 12" fill="none" stroke="#aaa" stroke-width="1.7"/><path d="M103.5 3 L103 9 L98 6.5 Z" fill="#aaa"/><circle cx="111" cy="6" r="0.9" fill="#aaa"/><path d="M120 2 V13 M124 2 V13 M119 5 H128 M119 10 H128" stroke="#bbb" stroke-width="1" stroke-dasharray="1.5,1"/><rect x="134.5" y="2.5" width="9" height="6" fill="#e0e6f0" stroke="#2a3a6a" stroke-width="1.1"/><rect x="137.5" y="6.5" width="7" height="6" fill="#fff" stroke="#2a3a6a" stroke-width="1.1"/><path d="M150 5.5 H155 L152.5 8.5 Z" fill="#333"/><path d="M159.5 5.5 H170.5 V13.5 H159.5 Z" fill="#f2ee80" stroke="#b0a830" stroke-width="1"/><path d="M165 5.5 L169 1.5" stroke="#555" stroke-width="1"/><path d="M175 2 V14" stroke="#e6e6e6"/><path d="M180 4.5 H186" stroke="#333" stroke-width="1"/><path d="M180 7 H186 L183 10.5 Z" fill="#333"/></svg>
<svg style="position:absolute;left:9px;top:123px" width="13" height="14" viewBox="0 0 13 14"><rect x="1.5" y="1.5" width="3" height="3" fill="none" stroke="#555" stroke-width="1"/><rect x="1.5" y="6" width="3" height="3" fill="none" stroke="#555" stroke-width="1"/><rect x="1.5" y="10.5" width="3" height="3" fill="none" stroke="#555" stroke-width="1"/><rect x="6.5" y="6" width="3" height="3" fill="none" stroke="#555" stroke-width="1"/></svg>
<svg style="position:absolute;left:27px;top:122px" width="16" height="15" viewBox="0 0 16 15"><rect x="2" y="2" width="6" height="5" fill="#d8e898" stroke="#777" stroke-width="0.8"/><rect x="4" y="4" width="6" height="5" fill="#e0f0a0" stroke="#777" stroke-width="0.8"/><rect x="7" y="8" width="7" height="6" fill="#e8e870" stroke="#887" stroke-width="0.8"/></svg>
<svg style="position:absolute;left:47px;top:124px" width="15" height="12" viewBox="0 0 15 12"><path d="M1.5 2.5 H6 L7 4 H13.5 V11 H1.5 Z" fill="#ecec80" stroke="#6a6a2a" stroke-width="1"/><path d="M5 7 L7.5 9.5 L10 7 Z" fill="#2a2a6a"/></svg>
<svg style="position:absolute;left:205px;top:141px" width="16" height="16" viewBox="0 0 16 16"><path d="M3 5 V14 M7 4 V14" stroke="#d07020" stroke-width="2"/><path d="M10 6 V14 M13 5 V14" stroke="#2a6ab0" stroke-width="2"/><path d="M1 5 L9 3 L14 2" stroke="#2a9a8a" stroke-width="1.2"/></svg>
<div style="position:absolute;left:26px;width:400px;text-align:center;top:142.5px;height:12px;line-height:12px;font-size:7px;color:#222;font-weight:normal;letter-spacing:0px;white-space:nowrap;">&#9662;</div>
<svg style="position:absolute;left:234px;top:141px" width="13" height="15" viewBox="0 0 13 15"><path d="M1.5 1.5 H9 L11.5 4 V13.5 H1.5 Z" fill="#fff" stroke="#555" stroke-width="1"/><path d="M3 5 H4 M5 5 H10 M3 8 H4 M5 8 H10 M3 11 H4 M5 11 H10" stroke="#555" stroke-width="0.9"/></svg>
<div style="position:absolute;left:54px;width:400px;text-align:center;top:142.5px;height:12px;line-height:12px;font-size:7px;color:#222;font-weight:normal;letter-spacing:0px;white-space:nowrap;">&#9662;</div>
<svg style="position:absolute;left:8px;top:173px" width="12" height="11" viewBox="0 0 12 11"><path d="M1.5 2.5 H9 V10 H1.5 Z" fill="#8ad8e0" stroke="#4aa8b8" stroke-width="1"/><path d="M9 2.5 L10.5 1.5 V9 L9 10" fill="#5ab0c0"/></svg>
<svg style="position:absolute;left:21px;top:185px" width="12" height="10" viewBox="0 0 12 10"><path d="M4.5 1.5 H11 L8 8.5 H1.5 Z" fill="none" stroke="#6e4c38" stroke-width="1.1"/></svg>
<svg style="position:absolute;left:21px;top:197px" width="12" height="10" viewBox="0 0 12 10"><path d="M4.5 1.5 H11 L8 8.5 H1.5 Z" fill="none" stroke="#6e4c38" stroke-width="1.1"/></svg>
<svg style="position:absolute;left:21px;top:209px" width="12" height="10" viewBox="0 0 12 10"><path d="M4.5 1.5 H11 L8 8.5 H1.5 Z" fill="none" stroke="#6e4c38" stroke-width="1.1"/></svg>
<svg style="position:absolute;left:22px;top:220px" width="10" height="12" viewBox="0 0 10 12"><path d="M2.5 11 L7.5 1" stroke="#6e4c38" stroke-width="1.2" stroke-dasharray="2,1.3"/></svg>
<svg style="position:absolute;left:22px;top:232px" width="10" height="12" viewBox="0 0 10 12"><path d="M2.5 11 L7.5 1" stroke="#6e4c38" stroke-width="1.2" stroke-dasharray="2,1.3"/></svg>
<svg style="position:absolute;left:22px;top:244px" width="10" height="12" viewBox="0 0 10 12"><path d="M2.5 11 L7.5 1" stroke="#6e4c38" stroke-width="1.2" stroke-dasharray="2,1.3"/></svg>
<svg style="position:absolute;left:21px;top:256px" width="13" height="12" viewBox="0 0 13 12"><path d="M2 2 L11 10 M11 2 L2 10" stroke="#8a5a3a" stroke-width="1" stroke-dasharray="1.5,1"/><path d="M2 6 H12" stroke="#555" stroke-width="1" stroke-dasharray="1,1"/></svg>
<svg style="position:absolute;left:23px;top:269px" width="10" height="10" viewBox="0 0 10 10"><path d="M1 3.5 H5 V1 L9.5 5 L5 9 V6.5 H1 Z" fill="#d01818"/></svg>
<svg style="position:absolute;left:21px;top:280px" width="13" height="12" viewBox="0 0 13 12"><path d="M2 10 C3 3 9 3 11 10" fill="none" stroke="#3a7ab0" stroke-width="1.3"/><path d="M1 1.5 H12 M1 11.5 H12" stroke="#5a9ad0" stroke-width="0.9" stroke-dasharray="1,1.5"/></svg>
<svg style="position:absolute;left:35px;top:282px" width="6" height="6" viewBox="0 0 6 6"><rect x="1" y="1" width="4" height="4" fill="#eef" stroke="#a8b828" stroke-width="1.2"/></svg>
<div style="position:absolute;left:-188px;width:400px;text-align:center;top:725.5px;height:12px;line-height:12px;font-size:6px;color:#c8c8c8;font-weight:normal;letter-spacing:0px;white-space:nowrap;">&#9664;</div>
<div style="position:absolute;left:-74px;width:400px;text-align:center;top:725.5px;height:12px;line-height:12px;font-size:6px;color:#c8c8c8;font-weight:normal;letter-spacing:0px;white-space:nowrap;">&#9654;</div>
<div style="position:absolute;left:-62px;width:400px;text-align:center;top:725.5px;height:12px;line-height:12px;font-size:6px;color:#333;font-weight:normal;letter-spacing:0px;white-space:nowrap;">&#9664;</div>
<div style="position:absolute;left:53.5px;width:400px;text-align:center;top:725.5px;height:12px;line-height:12px;font-size:6px;color:#333;font-weight:normal;letter-spacing:0px;white-space:nowrap;">&#9654;</div>
<svg style="position:absolute;left:158px;top:728px" width="12" height="7" viewBox="0 0 12 7"><path d="M2.5 1 V6 M4.5 1 V6 M6.5 1 V6 M8.5 1 V6" stroke="#777" stroke-width="0.8"/></svg>
<div style="position:absolute;left:248px;top:726px;width:11px;height:11px;background:#f2f2f4;border-left:1px solid #dadada;"></div>
<div style="position:absolute;left:53.5px;width:400px;text-align:center;top:725.5px;height:12px;line-height:12px;font-size:6px;color:#333;font-weight:normal;letter-spacing:0px;white-space:nowrap;">&#9654;</div>
<div style="position:absolute;left:133px;top:726px;width:10px;height:11px;background:#f2f2f4;border-right:1px solid #dadada;"></div>
<div style="position:absolute;left:-62px;width:400px;text-align:center;top:725.5px;height:12px;line-height:12px;font-size:6px;color:#333;font-weight:normal;letter-spacing:0px;white-space:nowrap;">&#9664;</div>
<svg style="position:absolute;left:7px;top:750px" width="40" height="18" viewBox="0 0 40 18"><rect x="1.5" y="1.5" width="14" height="15" fill="#f4f6f8" stroke="#c8c8c8" stroke-width="1"/><path d="M5 4 V14" stroke="#333" stroke-width="1.6" stroke-dasharray="2,1"/><circle cx="10" cy="9" r="1.6" fill="none" stroke="#333"/><rect x="18.5" y="1.5" width="14" height="15" fill="#f8f4ec" stroke="#e0c8a0" stroke-width="1"/><ellipse cx="25.5" cy="9" rx="5" ry="4" transform="rotate(-45 25.5 9)" fill="#4ab848"/><ellipse cx="24.5" cy="10" rx="2.5" ry="2" fill="#3a88d0"/></svg>
<svg style="position:absolute;left:48px;top:754px" width="6" height="6" viewBox="0 0 6 6"><circle cx="3" cy="3" r="2.3" fill="#0a0a9a"/></svg>
<div style="position:absolute;left:1021px;top:749px;width:1px;height:20px;background:#dedede;"></div>
<div style="position:absolute;left:1044px;top:749px;width:1px;height:20px;background:#dedede;"></div>
<div style="position:absolute;left:1068px;top:749px;width:1px;height:20px;background:#dedede;"></div>
<div style="position:absolute;left:1098px;top:749px;width:1px;height:20px;background:#dedede;"></div>
<svg style="position:absolute;left:1048px;top:752px" width="20" height="12" viewBox="0 0 20 12"><circle cx="10" cy="6" r="4" fill="#bfbfbf"/><path d="M1 6 H4 M16 6 H19" stroke="#d8d8d8" stroke-width="1.2"/></svg>
<div style="position:absolute;left:1070px;top:749px;width:26px;height:19px;background:#e9eaec;border:1px solid #d8d8d8;"></div>
<svg style="position:absolute;left:1076px;top:752px" width="14" height="13" viewBox="0 0 14 13"><rect x="2" y="2" width="4" height="9" rx="1" fill="#555"/><rect x="8" y="2" width="4" height="9" rx="1" fill="#555"/><rect x="5" y="4" width="4" height="3" fill="#777"/><rect x="3" y="5" width="2" height="4" fill="#ddd"/><rect x="9" y="5" width="2" height="4" fill="#ddd"/></svg>
<div style="position:absolute;left:1163px;top:752px;width:101px;height:14px;background:#fff;border:1px solid #e2e2e2;"></div>
<div style="position:absolute;left:1255px;top:753px;width:1px;height:12px;background:#e6e6e6;"></div>
<div style="position:absolute;left:1060px;width:400px;text-align:center;top:753.0px;height:12px;line-height:12px;font-size:6px;color:#aaa;font-weight:normal;letter-spacing:0px;white-space:nowrap;">&#9662;</div>
<svg style="position:absolute;left:10px;top:781px" width="13" height="12" viewBox="0 0 13 12"><path d="M0.5 1.8 L5.3 1.1 V5.6 H0.5 Z M6.1 1 L12 0.2 V5.6 H6.1 Z M0.5 6.4 H5.3 V10.9 L0.5 10.2 Z M6.1 6.4 H12 V11.8 L6.1 11 Z" fill="#f4f4f4"/></svg>
<svg style="position:absolute;left:268px;top:780px" width="18" height="13" viewBox="0 0 18 13"><rect x="4.5" y="1.5" width="9" height="10" fill="none" stroke="#ddd" stroke-width="1.2"/><path d="M2 3 V10 M16 3 V10" stroke="#ddd" stroke-width="1.2"/></svg>
<div style="position:absolute;left:490px;top:772px;width:33px;height:28px;background:#3a3a3a;"></div>
<svg style="position:absolute;left:0px;top:0px" width="1280" height="800" viewBox="0 0 1280 800"><path d="M303 781 H309 L310.5 782.5 H318 V792 H303 Z" fill="#f0c850"/><rect x="306" y="786" width="9" height="6" fill="#3ab0d8"/><circle cx="343" cy="786" r="7.5" fill="#e66a1a"/><circle cx="344.5" cy="784.5" r="4.5" fill="#2a5aa8"/><path d="M336 786 C337 792 345 795 350 789 C346 791 340 790 338 785 Z" fill="#f2a020"/><circle cx="376" cy="786" r="7.5" fill="#d83a2a"/><path d="M376 786 L369 790 A7.5 7.5 0 0 0 379 793.3 Z" fill="#2a9a4a"/><path d="M376 786 L379 793.3 A7.5 7.5 0 0 0 383.5 786 Z" fill="#f2c21a"/><circle cx="376" cy="786" r="3.5" fill="#fff"/><circle cx="376" cy="786" r="2.6" fill="#3a7ad8"/><path d="M402 779 L405 783 H411 L414 779 L414 786 C414 790 410 793 408 793 C406 793 402 790 402 786 Z" fill="#f4f4f4"/><path d="M404.5 786 L407 787.5 M411.5 786 L409 787.5" stroke="#111" stroke-width="1.5"/><rect x="433" y="779" width="14" height="14" fill="#f8f8f0"/><path d="M434 792 V786 L438 783 L441 788 L446 784 V792 Z" fill="#5ab83a"/><path d="M443 781 L448 778" stroke="#d8a020" stroke-width="1.5"/><rect x="465" y="780" width="16" height="12" fill="#111" stroke="#aaa" stroke-width="1"/><rect x="465" y="780" width="16" height="2" fill="#ccc"/><path d="M467 784 H470 M471 784 H476" stroke="#ddd" stroke-width="0.8"/><rect x="498" y="779" width="16" height="14" fill="#e8f0f8" stroke="#ccc"/><rect x="500" y="781" width="12" height="10" fill="#6aba48"/><rect x="502" y="781" width="9" height="7" fill="#7ac8e8"/><path d="M500 791 H512 V789 H502 Z" fill="#e8e040"/><rect x="531" y="779" width="14" height="14" fill="#f4f6fa"/><path d="M533 781 L543 781 L543 786 L533 788 Z" fill="#3a6ad8"/><path d="M534 791 L544 785" stroke="#c82a4a" stroke-width="1.3"/><path d="M533 790 L540 786" stroke="#2a3a8a" stroke-width="1.3"/><rect x="297" y="798" width="27" height="2" fill="#8ab4d8"/><rect x="330" y="798" width="27" height="2" fill="#8ab4d8"/><rect x="428" y="798" width="27" height="2" fill="#8ab4d8"/><rect x="461" y="798" width="27" height="2" fill="#8ab4d8"/><rect x="492" y="798" width="29" height="2" fill="#8ab4d8"/><rect x="526" y="798" width="27" height="2" fill="#8ab4d8"/><path d="M1071 782 L1073 784.5 H1076 L1078 782 V787 C1078 789.5 1075.5 791.5 1074.5 791.5 C1073.5 791.5 1071 789.5 1071 787 Z" fill="#eee"/><path d="M1086 790 C1085 787 1087 785 1089 786 C1090 783 1095 783 1095.5 786.5 C1097 786.5 1097 790 1095.5 790 Z" fill="#f0f0f0"/><ellipse cx="1106.5" cy="786.5" rx="5" ry="4" transform="rotate(35 1106.5 786.5)" fill="#7ab83a"/><path d="M1118 783 L1126 790 M1122 781 V792 M1117 788 H1127" stroke="#3a8ad8" stroke-width="1.2"/><circle cx="1122" cy="786.5" r="2.3" fill="#58b0f0"/><path d="M1135 783 L1138 781 L1141 783 L1138 785 Z M1135 787 L1138 785 L1141 787 L1138 789 Z" fill="#eee"/><circle cx="1140" cy="789" r="2.6" fill="#3ab848"/><rect x="1152" y="781" width="5" height="5" fill="none" stroke="#ddd"/><rect x="1151.5" y="785.5" width="6" height="7" rx="1" fill="none" stroke="#ddd" stroke-width="1.2"/><rect x="1165" y="781" width="11" height="11" fill="#d81c1c"/><path d="M1167.5 790 L1170.5 784 L1173.5 790" fill="none" stroke="#fff" stroke-width="1.5"/><rect x="1182.5" y="782.5" width="9" height="6" fill="none" stroke="#ddd" stroke-width="1"/><path d="M1186 790 H1189 M1181 786 V791" stroke="#ddd"/><path d="M1197.5 785 H1200 L1203 782 V791 L1200 788 H1197.5 Z" fill="none" stroke="#ddd" stroke-width="1"/><path d="M1205 784 C1206 786 1206 787 1205 789 M1207 783 C1208.5 785.5 1208.5 787.5 1207 790" fill="none" stroke="#999" stroke-width="0.9"/><path d="M1213.5 781.5 H1224.5 V789.5 H1219 L1217 792 V789.5 H1213.5 Z" fill="none" stroke="#eee" stroke-width="1.1"/><path d="M1215.5 784 H1222.5 M1215.5 786.5 H1222.5" stroke="#eee" stroke-width="0.9"/></svg>
</body></html>
